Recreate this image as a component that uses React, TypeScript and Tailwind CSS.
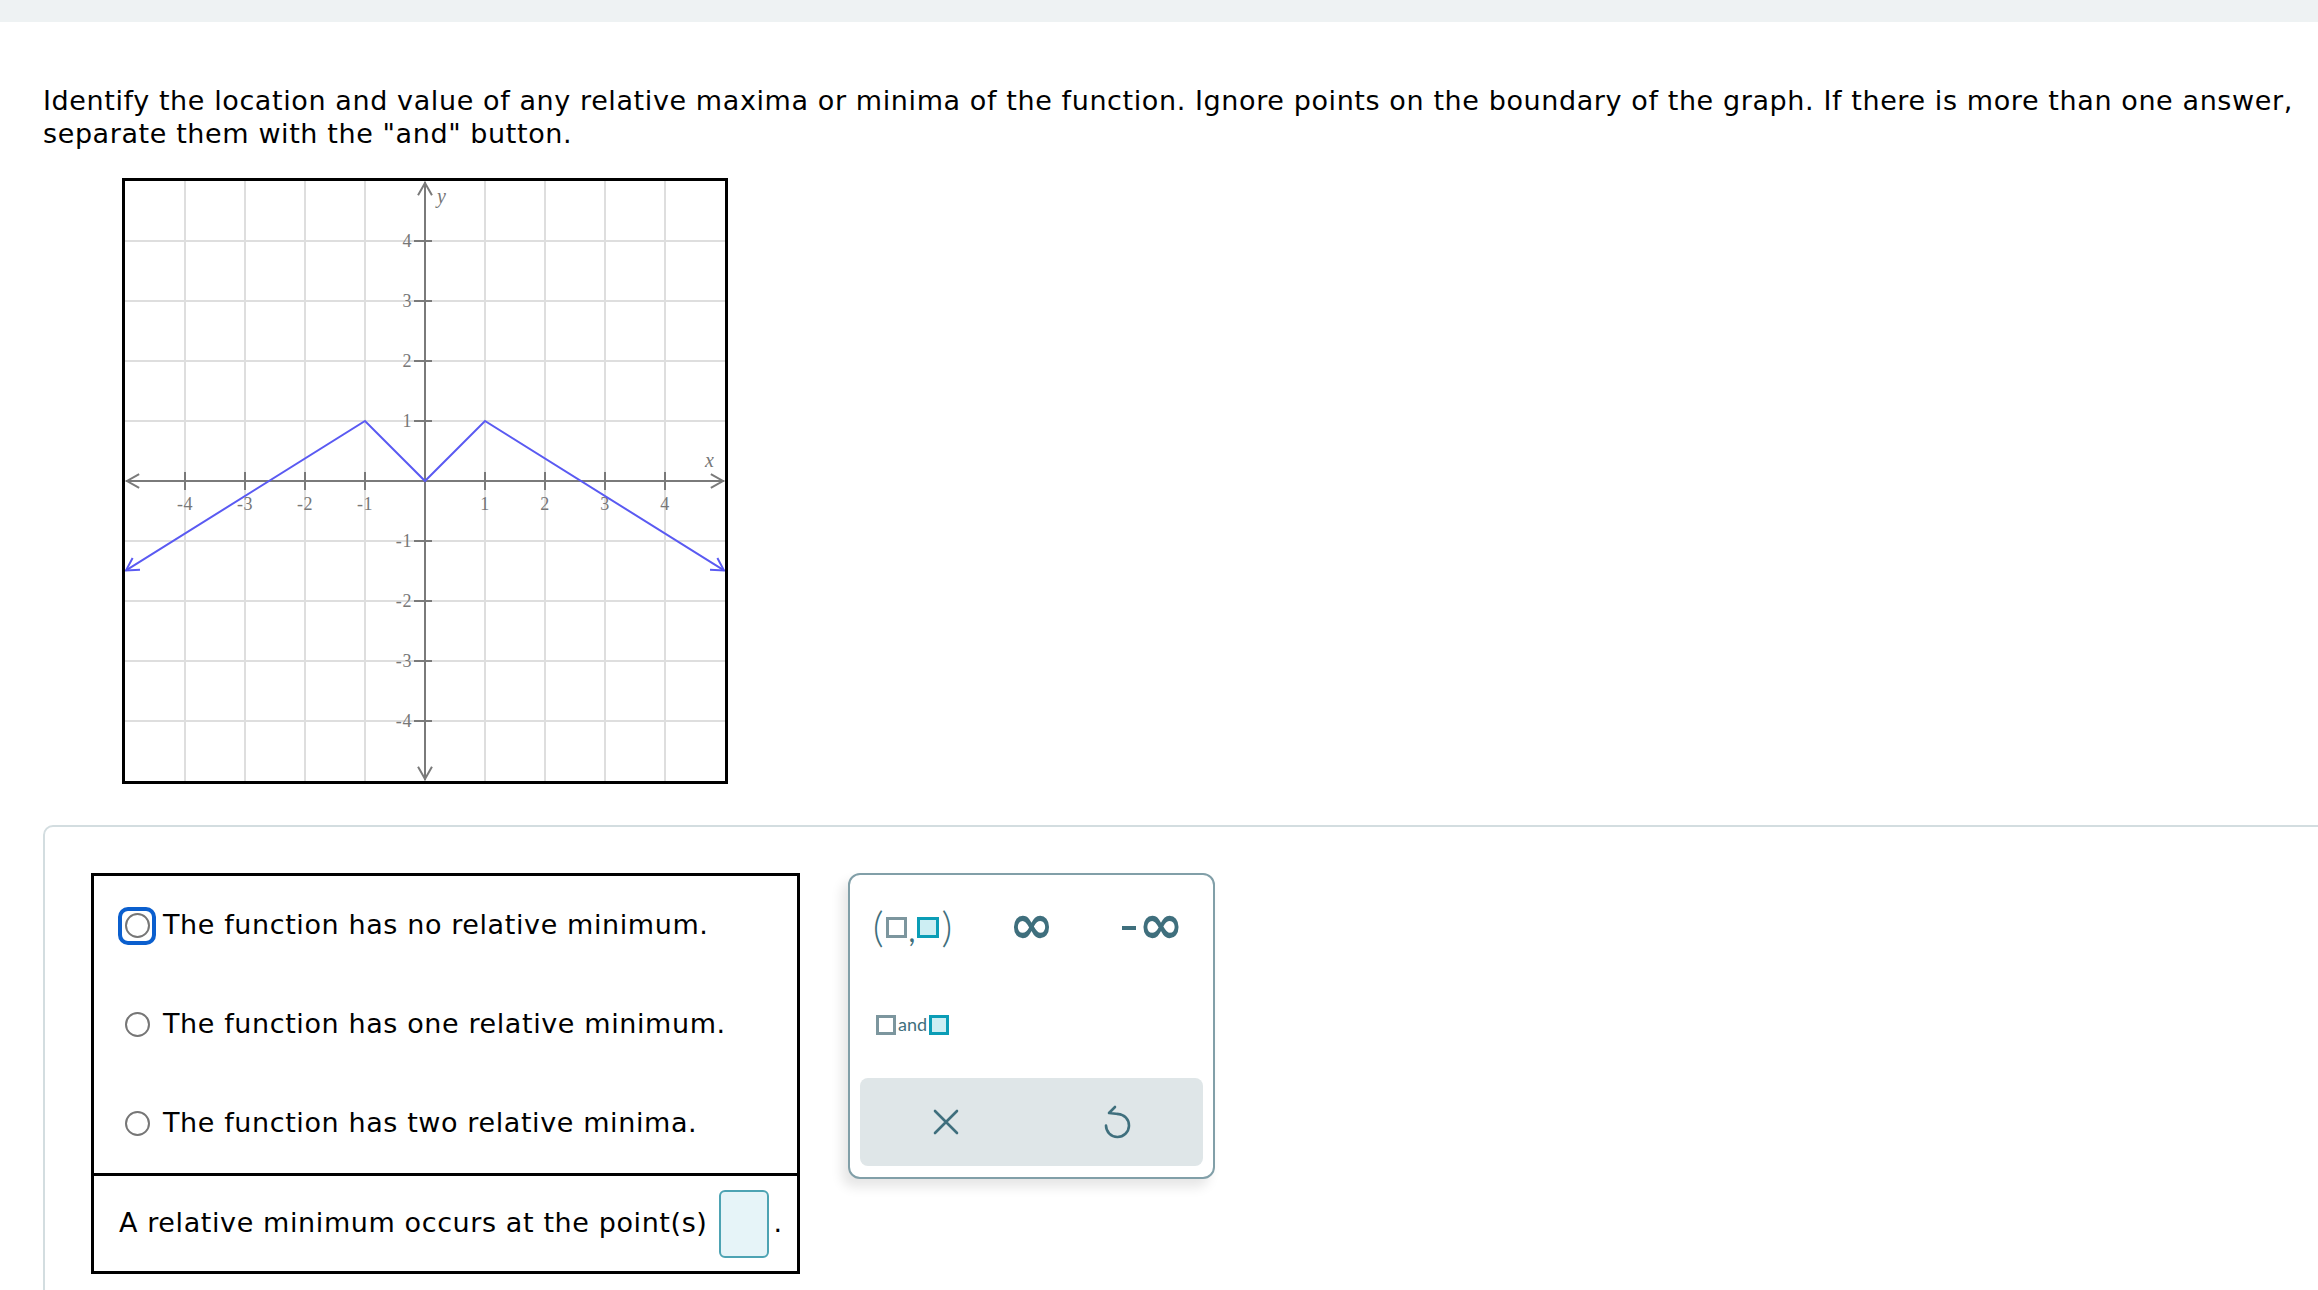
import React from 'react';
import clsx from 'clsx';

const GRID = [60, 120, 180, 240, 300, 360, 420, 480, 540];
const TICKS = [-4, -3, -2, -1, 1, 2, 3, 4];

// open arrow head: tip plus two arms going back at +/-30deg
function arrowHead(tx: number, ty: number, dx: number, dy: number, len = 14) {
  const a = Math.atan2(-dy, -dx);
  const p1 = [tx + len * Math.cos(a + 0.52), ty + len * Math.sin(a + 0.52)];
  const p2 = [tx + len * Math.cos(a - 0.52), ty + len * Math.sin(a - 0.52)];
  return `M${p1[0]} ${p1[1]} L${tx} ${ty} L${p2[0]} ${p2[1]}`;
}

function Graph() {
  const axis = '#7a7a7a';
  const blue = '#5a5af2';
  return (
    <div className="w-[606px] h-[606px] border-[3px] border-black">
      <svg width="600" height="600" viewBox="0 0 600 600" className="block">
        {GRID.map((v) => (
          <line key={'v' + v} x1={v} y1={0} x2={v} y2={600} stroke="#dedede" strokeWidth={2} />
        ))}
        {GRID.map((v) => (
          <line key={'h' + v} x1={0} y1={v} x2={600} y2={v} stroke="#dedede" strokeWidth={2} />
        ))}

        {/* axes */}
        <line x1={1} y1={300} x2={599} y2={300} stroke={axis} strokeWidth={2} />
        <line x1={300} y1={1} x2={300} y2={599} stroke={axis} strokeWidth={2} />
        <path d={arrowHead(2, 300, -1, 0)} fill="none" stroke={axis} strokeWidth={2} />
        <path d={arrowHead(598, 300, 1, 0)} fill="none" stroke={axis} strokeWidth={2} />
        <path d={arrowHead(300, 2, 0, -1)} fill="none" stroke={axis} strokeWidth={2} />
        <path d={arrowHead(300, 598, 0, 1)} fill="none" stroke={axis} strokeWidth={2} />

        {TICKS.map((t) => (
          <g key={'t' + t}>
            <line x1={300 + t * 60} y1={291} x2={300 + t * 60} y2={309} stroke={axis} strokeWidth={2} />
            <line x1={289} y1={300 - t * 60} x2={307} y2={300 - t * 60} stroke={axis} strokeWidth={2} />
            <text
              x={300 + t * 60}
              y={329}
              textAnchor="middle"
              fill="#777"
              fontSize={18}
              fontFamily="'Liberation Serif', serif"
            >
              {t}
            </text>
            <text
              x={287}
              y={306 - t * 60}
              textAnchor="end"
              fill="#777"
              fontSize={18}
              fontFamily="'Liberation Serif', serif"
            >
              {t}
            </text>
          </g>
        ))}
        <text x={312} y={22} fill="#777" fontSize={20} fontStyle="italic" fontFamily="'Liberation Serif', serif">
          y
        </text>
        <text x={580} y={286} fill="#777" fontSize={20} fontStyle="italic" fontFamily="'Liberation Serif', serif">
          x
        </text>

        {/* function */}
        <polyline
          points="1,389.4 240,240 300,300 360,240 599,389.4"
          fill="none"
          stroke={blue}
          strokeWidth={2}
        />
        <path d={arrowHead(1, 389.4, -240, 150)} fill="none" stroke={blue} strokeWidth={2} />
        <path d={arrowHead(599, 389.4, 240, 150)} fill="none" stroke={blue} strokeWidth={2} />
      </svg>
    </div>
  );
}

function Radio({ focused }: { focused?: boolean }) {
  return (
    <div
      className={clsx(
        'w-[38px] h-[38px] flex items-center justify-center rounded-[10px] shrink-0',
        focused && 'border-4 border-[#0b5fce]'
      )}
    >
      <div className="w-[25px] h-[25px] rounded-full border-2 border-[#767676] bg-white" />
    </div>
  );
}

const GraySq = () => <span className="inline-block w-[21px] h-[21px] border-[3px] border-[#7c969e] bg-white" />;
const TealSq = () => <span className="inline-block w-[22px] h-[21px] border-[3px] border-[#0b9db6] bg-[#cdeef3]" />;

function ClearIcon() {
  return (
    <svg width="28" height="28" viewBox="0 0 28 28" fill="none" stroke="#3f6f7d" strokeWidth="2.6" strokeLinecap="round">
      <path d="M3 3 L25 25 M25 3 L3 25" />
    </svg>
  );
}

function UndoIcon() {
  return (
    <svg width="30" height="34" viewBox="0 0 30 34" fill="none" stroke="#3f6f7d" strokeWidth="2.6" strokeLinecap="round" strokeLinejoin="round">
      <path d="M16 9 A11.5 11.5 0 1 1 4 20.5" />
      <path d="M13 2 L7 8 L16 9" />
    </svg>
  );
}

function Keypad() {
  return (
    <div className="w-[367px] h-[306px] border-2 border-[#819fa8] rounded-[12px] bg-white shadow-[-6px_8px_12px_rgba(0,0,0,0.10)] flex flex-col pt-[4px] font-['Lato',sans-serif] text-[#3f6f7d]">
      <div className="grid grid-cols-3 h-[97px] items-center">
        <div className="flex items-center justify-center gap-[2px] pl-[4px]">
          <span className="text-[42px] font-light leading-none pb-[4px]">(</span>
          <GraySq />
          <span className="text-[30px] leading-none mt-[4px]">,</span>
          <TealSq />
          <span className="text-[42px] font-light leading-none pb-[4px]">)</span>
        </div>
        <div className="flex items-center justify-center text-[54px] leading-none pb-[6px] font-['DejaVu_Sans',sans-serif] font-bold">∞</div>
        <div className="flex items-center justify-center leading-none">
          <span className="w-[14px] h-[4px] bg-[#3f6f7d] mr-[3px]" />
          <span className="text-[54px] leading-none pb-[6px] font-['DejaVu_Sans',sans-serif] font-bold">∞</span>
        </div>
      </div>
      <div className="grid grid-cols-3 h-[97px] items-center">
        <div className="flex items-center justify-center gap-[2px] pl-[4px]">
          <span className="inline-block w-[20px] h-[20px] border-[3px] border-[#7c969e] bg-white" />
          <span className="text-[18px] leading-none pb-[2px]">and</span>
          <span className="inline-block w-[20px] h-[20px] border-[3px] border-[#0b9db6] bg-[#cdeef3]" />
        </div>
      </div>
      <div className="mx-[10px] mt-[5px] h-[88px] rounded-[8px] bg-[#dfe6e8] grid grid-cols-2 items-center">
        <div className="flex justify-center">
          <ClearIcon />
        </div>
        <div className="flex justify-center">
          <UndoIcon />
        </div>
      </div>
    </div>
  );
}

export default function App() {
  const options = [
    'The function has no relative minimum.',
    'The function has one relative minimum.',
    'The function has two relative minima.',
  ];
  return (
    <div className="w-full h-[1290px] overflow-hidden bg-white text-black font-['DejaVu_Sans','Verdana',sans-serif] tracking-[0.6px]">
      <div className="h-[22px] bg-[#eef2f3]" />
      <p className="pl-[43px] pt-[62px] text-[27px] leading-[33px] whitespace-nowrap">
        Identify the location and value of any relative maxima or minima of the function. Ignore points on the boundary of the graph. If there is more than one answer,
        <br />
        separate them with the "and" button.
      </p>
      <div className="pl-[122px] pt-[28px]">
        <Graph />
      </div>
      <div className="ml-[43px] mt-[41px] w-[2400px] h-[600px] border-2 border-[#d3dde0] rounded-tl-[10px] pl-[46px] pt-[46px]">
        <div className="flex items-start gap-[48px]">
          <div className="w-[709px] border-[3px] border-black">
            <div className="flex flex-col">
              {options.map((o, i) => (
                <div key={o} className="h-[99px] flex items-center pl-[24px] gap-[7px] text-[27px]">
                  <Radio focused={i === 0} />
                  <span>{o}</span>
                </div>
              ))}
            </div>
            <div className="border-t-[3px] border-black h-[98px] flex items-center pl-[25px] text-[27px]">
              <span>A relative minimum occurs at the point(s)</span>
              <span className="ml-[12px] w-[50px] h-[68px] rounded-[6px] border-2 border-[#4da3b3] bg-[#e6f4f8]" />
              <span className="ml-[4px]">.</span>
            </div>
          </div>
          <div className="tracking-normal">
            <Keypad />
          </div>
        </div>
      </div>
    </div>
  );
}
